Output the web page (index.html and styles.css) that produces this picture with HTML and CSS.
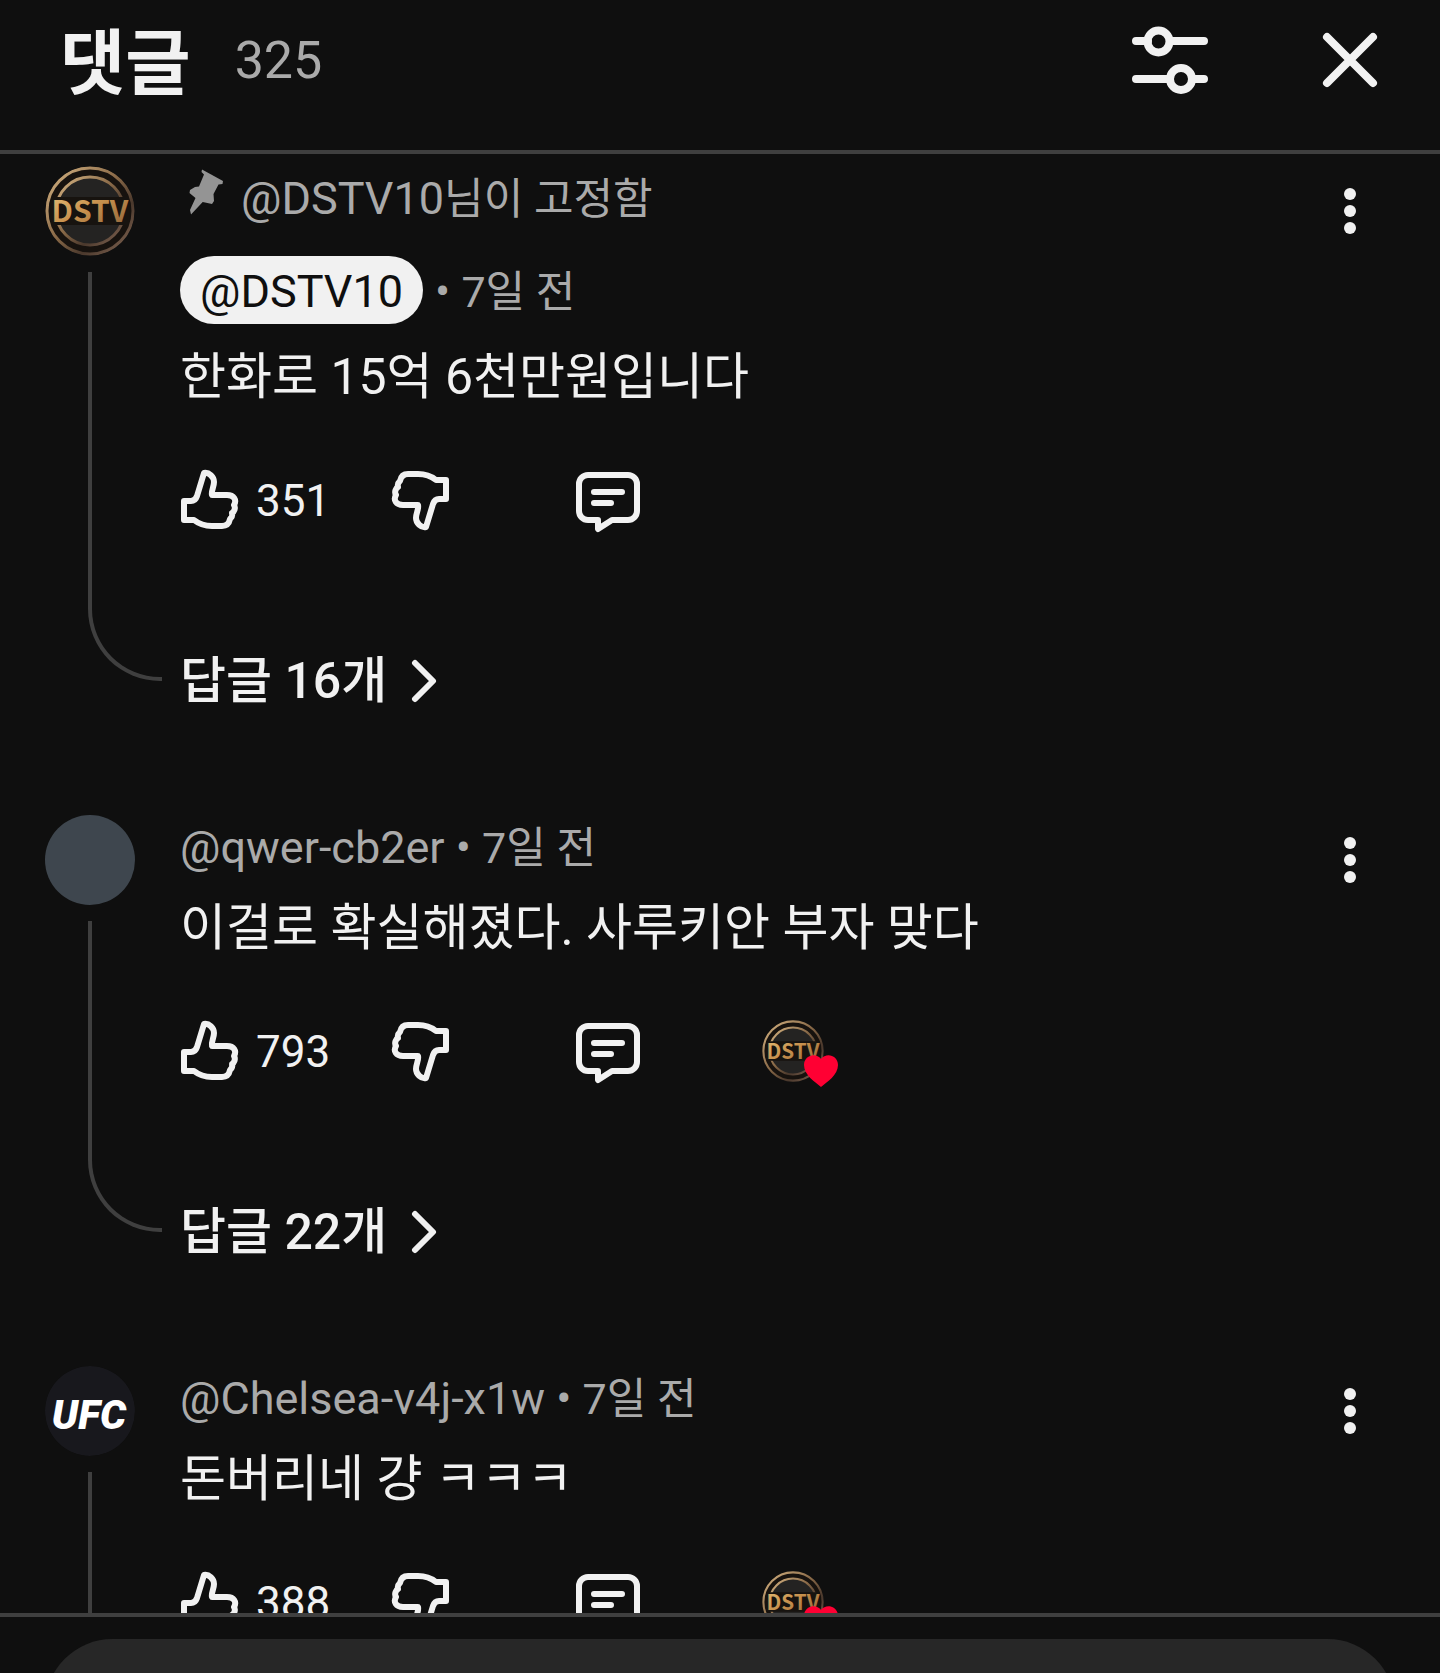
FILE: index.html
```html
<!DOCTYPE html>
<html lang="ko">
<head>
    <meta charset="UTF-8">
    <meta name="viewport" content="width=device-width, initial-scale=1.0">
    <title>댓글</title>
    <link rel="stylesheet" href="styles.css">
</head>
<body>
    <!-- 공통 아이콘 -->
    <svg class="sprite" aria-hidden="true">
        <defs>
            <linearGradient id="gold" x1="0" y1="0" x2="1" y2="1">
                <stop offset="0" stop-color="#e8c27a"/>
                <stop offset="0.5" stop-color="#c68f4c"/>
                <stop offset="1" stop-color="#8a6038"/>
            </linearGradient>
            <linearGradient id="ring" x1="0" y1="0" x2="1" y2="1">
                <stop offset="0" stop-color="#d8b684"/>
                <stop offset="0.45" stop-color="#8a6a48"/>
                <stop offset="0.7" stop-color="#4a382c"/>
                <stop offset="1" stop-color="#8a6c58"/>
            </linearGradient>
        </defs>
        <symbol id="icon-like" viewBox="0 0 64 64">
            <path d="M4 51V32H11C14 32 16 30 17 27L24 4C29 3 34 8 34 13C34 18 31 22 32 26H47C54 26 57 31 54 36C56 39 54 43 52 44C53 48 51 49 50 50C49 55 46 57 42 57H32C25 57 19 55 14 51Z"/>
        </symbol>
        <symbol id="icon-dislike" viewBox="0 0 64 64">
            <path transform="rotate(180 29.500 31)" d="M4 51V32H11C14 32 16 30 17 27L24 4C29 3 34 8 34 13C34 18 31 22 32 26H47C54 26 57 31 54 36C56 39 54 43 52 44C53 48 51 49 50 50C49 55 46 57 42 57H32C25 57 19 55 14 51Z"/>
        </symbol>
        <symbol id="icon-reply" viewBox="0 0 64 64">
            <path d="M12 6H52a9 9 0 0 1 9 9V42a9 9 0 0 1-9 9H36L22 60V51H12a9 9 0 0 1-9-9V15a9 9 0 0 1 9-9ZM18 23H46M18 34H35"/>
        </symbol>
        <symbol id="icon-more" viewBox="0 0 90 90">
            <circle cx="45" cy="28" r="6"/>
            <circle cx="45" cy="45" r="6"/>
            <circle cx="45" cy="62" r="6"/>
        </symbol>
        <symbol id="icon-chevron" viewBox="0 0 26 44">
            <path d="M4 4L22 22L4 40"/>
        </symbol>
        <symbol id="coin" viewBox="0 0 90 90">
            <circle cx="45" cy="45" r="44" fill="#17120e"/>
            <circle cx="45" cy="45" r="43" fill="none" stroke="url(#ring)" stroke-width="3"/>
            <circle cx="45" cy="45" r="34" fill="#242322" stroke="url(#ring)" stroke-width="3"/>
            <path d="M6 31H84V59H6Z" fill="#17130f"/>
        </symbol>
        <symbol id="icon-heart" viewBox="0 0 36 34">
            <path d="M18 33C12 28 1 21 1 11C1 1 13-2 18 5C23-2 35 1 35 11C35 21 24 28 18 33Z"/>
        </symbol>
    </svg>

    <header class="header">
        <h1>댓글</h1>
        <span class="total">325</span>
        <button class="icon-btn" aria-label="정렬">
            <svg class="line-icon bold" viewBox="0 0 90 90">
                <path d="M11 26H23M45 26H79M11 64H45M67 64H79"/>
                <circle cx="33.500" cy="26.500" r="11"/>
                <circle cx="56" cy="64" r="11"/>
            </svg>
        </button>
        <button class="icon-btn" aria-label="닫기">
            <svg class="line-icon bold" viewBox="0 0 90 90">
                <path d="M22 22L68 68M68 22L22 68"/>
            </svg>
        </button>
    </header>

    <main class="comments">
        <article class="comment">
            <div class="side">
                <svg class="avatar" viewBox="0 0 90 90" role="img" aria-label="DSTV">
                    <use href="#coin"/>
                    <text class="logo-dstv-text" x="45" y="56" text-anchor="middle">DSTV</text>
                </svg>
                <div class="thread"></div>
            </div>
            <div class="body">
                <p class="pinned">
                    <svg class="pin" viewBox="-5 -1 45 49"><path d="M17 2.500L38 14L37.500 17L33.500 17.500L28.500 27L29 34L27 37L17.700 35L6 47.500L5 43L10.500 31L4.500 26L5 23L10 20L14 19.500L19 7.500L16.500 5Z"/></svg>
                    <span>@DSTV10<span class="ko">님이 고정함</span></span>
                </p>
                <div class="meta owner"><a class="chip" href="#">@DSTV10</a><span class="when">• <time class="ko">7일 전</time></span></div>
                <p class="text">한화로 15억 6천만원입니다</p>
                <div class="actions">
                    <button class="action" aria-label="좋아요"><svg class="line-icon"><use href="#icon-like"/></svg>351</button>
                    <button class="action" aria-label="싫어요"><svg class="line-icon"><use href="#icon-dislike"/></svg></button>
                    <button class="action" aria-label="답글"><svg class="line-icon"><use href="#icon-reply"/></svg></button>
                </div>
                <a class="replies" href="#">답글 16개<svg class="chevron line-icon"><use href="#icon-chevron"/></svg></a>
            </div>
            <button class="icon-btn" aria-label="더보기"><svg class="more"><use href="#icon-more"/></svg></button>
        </article>

        <article class="comment">
            <div class="side">
                <div class="avatar avatar-plain"></div>
                <div class="thread"></div>
            </div>
            <div class="body">
                <div class="meta">@qwer-cb2er • <time class="ko">7일 전</time></div>
                <p class="text">이걸로 확실해졌다. 사루키안 부자 맞다</p>
                <div class="actions">
                    <button class="action" aria-label="좋아요"><svg class="line-icon"><use href="#icon-like"/></svg>793</button>
                    <button class="action" aria-label="싫어요"><svg class="line-icon"><use href="#icon-dislike"/></svg></button>
                    <button class="action" aria-label="답글"><svg class="line-icon"><use href="#icon-reply"/></svg></button>
                    <div class="hearted">
                        <svg class="small-logo" viewBox="0 0 90 90" role="img" aria-label="DSTV">
                            <use href="#coin"/>
                            <text class="logo-dstv-text" x="45" y="56" text-anchor="middle">DSTV</text>
                        </svg>
                        <svg class="heart"><use href="#icon-heart"/></svg>
                    </div>
                </div>
                <a class="replies" href="#">답글 22개<svg class="chevron line-icon"><use href="#icon-chevron"/></svg></a>
            </div>
            <button class="icon-btn" aria-label="더보기"><svg class="more"><use href="#icon-more"/></svg></button>
        </article>

        <article class="comment">
            <div class="side">
                <svg class="avatar" viewBox="0 0 90 90" role="img" aria-label="UFC">
                    <circle cx="45" cy="45" r="45" fill="#18181d"/>
                    <text class="logo-ufc-text" x="44" y="63" text-anchor="middle">UFC</text>
                </svg>
                <div class="thread thread-open"></div>
            </div>
            <div class="body">
                <div class="meta">@Chelsea-v4j-x1w • <time class="ko">7일 전</time></div>
                <p class="text">돈버리네 걍 ㅋㅋㅋ</p>
                <div class="actions">
                    <button class="action" aria-label="좋아요"><svg class="line-icon"><use href="#icon-like"/></svg>388</button>
                    <button class="action" aria-label="싫어요"><svg class="line-icon"><use href="#icon-dislike"/></svg></button>
                    <button class="action" aria-label="답글"><svg class="line-icon"><use href="#icon-reply"/></svg></button>
                    <div class="hearted">
                        <svg class="small-logo" viewBox="0 0 90 90" role="img" aria-label="DSTV">
                            <use href="#coin"/>
                            <text class="logo-dstv-text" x="45" y="56" text-anchor="middle">DSTV</text>
                        </svg>
                        <svg class="heart"><use href="#icon-heart"/></svg>
                    </div>
                </div>
            </div>
            <button class="icon-btn" aria-label="더보기"><svg class="more"><use href="#icon-more"/></svg></button>
        </article>
    </main>

    <footer class="footer">
        <input class="comment-input" type="text" aria-label="댓글 추가">
    </footer>
</body>
</html>
```

FILE: styles.css
```css
* {
    box-sizing: border-box;
}
body {
    margin: 0;
    height: 100vh;
    display: flex;
    flex-direction: column;
    overflow: hidden;
    background-color: #0f0f0f;
    color: #f1f1f1;
    font-family: Roboto, "Noto Sans CJK KR", sans-serif;
    font-size: 45px;
}
h1, p {
    margin: 0;
}
a {
    color: inherit;
    text-decoration: none;
}
button {
    padding: 0;
    border: none;
    background: none;
    color: inherit;
    font: inherit;
    cursor: pointer;
}
svg {
    display: block;
    flex: none;
}
.sprite {
    position: absolute;
    width: 0;
    height: 0;
}

/* 상단 */
.header {
    flex: none;
    display: flex;
    align-items: center;
    padding: 0 45px 30px 60px;
    border-bottom: 4px solid #3f3f3f;
}
.header h1 {
    padding-top: 8px;
    font-size: 71px;
    font-weight: 700;
    line-height: 112px;
}
.total {
    flex: 1;
    margin-left: 44px;
    color: #aaa;
    font-size: 52px;
}
.header .icon-btn + .icon-btn {
    margin-left: 90px;
}
.icon-btn,
.icon-btn svg {
    width: 90px;
    height: 90px;
}
.line-icon {
    fill: none;
    stroke: #f1f1f1;
    stroke-width: 6px;
    stroke-linecap: round;
    stroke-linejoin: round;
}
.line-icon.bold {
    stroke-width: 8px;
}
.more {
    fill: #f1f1f1;
}

/* 댓글 목록 */
.comments {
    flex: 1;
    min-height: 0;
    overflow: hidden;
    padding-top: 12px;
}
.comment {
    display: grid;
    grid-template-columns: 135px 1fr 90px;
    padding: 0 45px;
    margin-bottom: 102px;
}
.side {
    display: flex;
    flex-direction: column;
}
.avatar {
    width: 90px;
    height: 90px;
    border-radius: 50%;
}
.avatar-plain {
    background-color: #3e464e;
}
.thread {
    flex: 1;
    width: 74px;
    margin: 16px 0 32px 43px;
    border-left: 4px solid #3f3f3f;
    border-bottom: 4px solid #3f3f3f;
    border-bottom-left-radius: 72px;
}
.thread-open {
    margin-bottom: 0;
    border-bottom: none;
    border-radius: 0;
}
.ko {
    font-size: 43px;
}
.pinned {
    display: flex;
    align-items: flex-start;
    gap: 16px;
    height: 66px;
    margin-bottom: 24px;
    color: #aaa;
    line-height: 66px;
}
.pin {
    width: 45px;
    height: 49px;
    fill: #949494;
}
.meta {
    height: 66px;
    margin-bottom: 14px;
    color: #aaa;
    line-height: 66px;
}
.owner {
    display: flex;
    align-items: center;
    gap: 12px;
    height: 68px;
    margin-bottom: 20px;
}
.chip,
.when {
    padding-top: 4px;
    line-height: 64px;
}
.chip {
    padding-left: 20px;
    padding-right: 20px;
    border-radius: 34px;
    background-color: #f1f1f1;
    color: #0f0f0f;
}
.text {
    font-size: 50px;
    line-height: 66px;
}
.actions {
    display: grid;
    grid-template-columns: 211px 185px 186px 77px;
    margin-top: 59px;
}
.action {
    display: flex;
    align-items: center;
    gap: 12px;
    font-size: 44px;
}
.action svg {
    width: 64px;
    height: 64px;
}
.hearted {
    position: relative;
}
.small-logo {
    width: 62px;
    height: 62px;
}
.heart {
    position: absolute;
    right: 0;
    bottom: -4px;
    width: 36px;
    height: 34px;
    fill: #ff0033;
}
.replies {
    display: flex;
    align-items: center;
    gap: 24px;
    width: max-content;
    margin-top: 116px;
    font-size: 50px;
    font-weight: 500;
    line-height: 64px;
}
.chevron {
    width: 26px;
    height: 44px;
}
.logo-dstv-text {
    fill: url(#gold);
    font-family: "Noto Sans CJK KR", sans-serif;
    font-size: 30px;
    font-weight: 700;
}
.logo-ufc-text {
    fill: #fff;
    font-size: 41px;
    font-weight: 900;
    font-style: italic;
}

/* 댓글 입력 */
.footer {
    flex: none;
    height: 60px;
    padding: 22px 45px 0;
    border-top: 4px solid #3f3f3f;
    overflow: hidden;
}
.comment-input {
    width: 100%;
    height: 135px;
    padding: 0 45px;
    border: none;
    border-radius: 68px;
    background-color: #272727;
    color: inherit;
    font: inherit;
}
```
